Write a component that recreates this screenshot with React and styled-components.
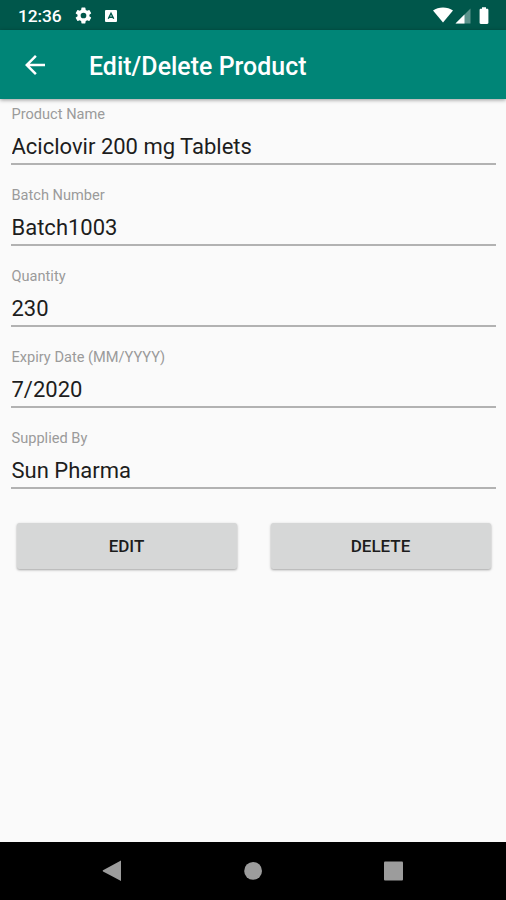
import React from 'react';
import styled, { createGlobalStyle } from 'styled-components';

const GlobalStyle = createGlobalStyle`
  * { box-sizing: border-box; }
  body { margin: 0; background: #fafafa; font-family: Roboto, sans-serif; }
`;

const Screen = styled.div`
  display: flex;
  flex-direction: column;
  width: 506px;
  height: 900px;
  background: #fafafa;
  overflow: hidden;
`;

const StatusBar = styled.header`
  display: flex;
  flex: none;
  align-items: center;
  height: 30px;
  padding: 1px 15px 0 18px;
  background: #00574b;
  color: #fff;
`;

const Clock = styled.span`
  width: 56px;
  font-size: 17.4px;
  font-weight: 500;
  line-height: 20px;
  letter-spacing: -0.1px;
  white-space: nowrap;
`;

const Notifications = styled.div`
  display: flex;
  align-items: center;
  gap: 11px;
  flex: 1;
`;

const SystemIcons = styled.div`
  display: flex;
  align-items: center;
`;

const Icon = styled.svg`
  display: block;
  flex: none;
`;

const AppBar = styled.nav`
  display: flex;
  flex: none;
  align-items: center;
  height: 69px;
  padding-left: 20px;
  background: #008577;
  color: #fff;
  box-shadow: 0 1px 4px rgba(0, 0, 0, 0.4);
`;

const BackButton = styled.button`
  width: 30px;
  height: 30px;
  margin: 0 39px 0 0;
  padding: 0;
  border: 0;
  background: none;
  color: inherit;
`;

const Title = styled.h1`
  margin: 4px 0 0;
  font-size: 24.9px;
  font-weight: 500;
  line-height: 32px;
  letter-spacing: 0.03px;
  white-space: nowrap;
`;

const Form = styled.main`
  flex: 1;
  padding: 5px 10px 0 11px;
`;

const Field = styled.label`
  display: block;
  height: 81.1px;
`;

const Label = styled.span`
  display: block;
  height: 20px;
  padding-left: 0.5px;
  color: #9b9b9b;
  font-size: 14.6px;
  font-weight: 400;
  line-height: 20px;
`;

const Input = styled.input`
  display: block;
  width: 100%;
  height: 41px;
  padding: 8px 0 3px 0.5px;
  border: 0;
  border-bottom: 2px solid #b2b2b2;
  border-radius: 0;
  outline: 0;
  background: none;
  color: #1d1d1d;
  font: 400 22px/28px Roboto, sans-serif;
`;

const Actions = styled.div`
  display: grid;
  grid-template-columns: 1fr 1fr;
  gap: 34px;
  padding: 13.5px 5.5px 0;
`;

const ActionButton = styled.button`
  height: 46px;
  padding: 0;
  border: 0;
  border-radius: 2.5px;
  background: #d6d7d7;
  color: #1c1c1c;
  font: 500 17px/46px Roboto, sans-serif;
  text-transform: uppercase;
  box-shadow: 0 1px 2.5px rgba(0, 0, 0, 0.36);
`;

const NavigationBar = styled.footer`
  display: flex;
  flex: none;
  align-items: center;
  justify-content: space-between;
  height: 58px;
  padding: 0 102px;
  background: #000;
`;

const fields = [
  ['Product Name', 'Aciclovir 200 mg Tablets'],
  ['Batch Number', 'Batch1003'],
  ['Quantity', '230'],
  ['Expiry Date (MM/YYYY)', '7/2020'],
  ['Supplied By', 'Sun Pharma'],
];

export default function App() {
  return (
    <>
      <GlobalStyle />
      <Screen>
        <StatusBar>
          <Clock>12:36</Clock>
          <Notifications>
            <Icon width="19" height="19" viewBox="0 0 24 24" fill="currentColor">
              <path d="M19.4 13a7.8 7.8 0 0 0 0-2l2.1-1.6a.5.5 0 0 0 .1-.6l-2-3.5a.5.5 0 0 0-.6-.2l-2.5 1a7.3 7.3 0 0 0-1.7-1l-.4-2.6a.5.5 0 0 0-.5-.5h-4a.5.5 0 0 0-.5.5L9 5.1a7.3 7.3 0 0 0-1.7 1l-2.5-1a.5.5 0 0 0-.6.2l-2 3.5a.5.5 0 0 0 .1.6L4.5 11a7.8 7.8 0 0 0 0 2l-2.2 1.6a.5.5 0 0 0-.1.6l2 3.5c.1.2.4.3.6.2l2.5-1a7.3 7.3 0 0 0 1.7 1l.4 2.6c0 .3.2.5.5.5h4c.3 0 .5-.2.5-.5l.4-2.6a7.3 7.3 0 0 0 1.7-1l2.5 1c.2.1.5 0 .6-.2l2-3.5a.5.5 0 0 0-.1-.6zM12 15.6a3.6 3.6 0 1 1 0-7.2 3.6 3.6 0 0 1 0 7.2z" />
            </Icon>
            <Icon width="14" height="14" viewBox="0 0 14 14">
              <rect x="1" y="1" width="12" height="12" rx="1" fill="#fff" />
              <path d="M4.3 9.7 7 4.3l2.7 5.4M5.3 8.3h3.4" fill="none" stroke="#00574b" strokeWidth="1.4" />
            </Icon>
          </Notifications>
          <SystemIcons>
            <Icon width="58" height="20" viewBox="0 0 58 20" fill="#fff">
              <path d="M0 4.5C5.3.4 14.7.4 20 4.5L10 16.5Z" />
              <path d="M37.5 2.5V17.5H22.5Z" opacity=".36" />
              <path d="M31.5 8.5V17.5H22.5Z" />
              <path d="M49 1.2h4v1.6h1.2c.7 0 1.2.5 1.2 1.2v12.7c0 .7-.5 1.2-1.2 1.2h-6.4c-.7 0-1.2-.5-1.2-1.2V4c0-.7.5-1.2 1.2-1.2H49z" />
            </Icon>
          </SystemIcons>
        </StatusBar>
        <AppBar>
          <BackButton aria-label="Back">
            <Icon width="30" height="30" viewBox="0 0 24 24" fill="currentColor">
              <path d="M20 11H7.83l5.59-5.59L12 4l-8 8 8 8 1.41-1.41L7.83 13H20z" />
            </Icon>
          </BackButton>
          <Title>Edit/Delete Product</Title>
        </AppBar>
        <Form>
          {fields.map(([label, value]) => (
            <Field key={label}>
              <Label>{label}</Label>
              <Input defaultValue={value} />
            </Field>
          ))}
          <Actions>
            <ActionButton>Edit</ActionButton>
            <ActionButton>Delete</ActionButton>
          </Actions>
        </Form>
        <NavigationBar>
          <Icon width="20" height="22" viewBox="0 0 20 22" fill="#9c9c9c">
            <path d="M1 10.2 19 .5V21Q10 16 1 11.4Q.3 10.8 1 10.2Z" />
          </Icon>
          <Icon width="18" height="18" viewBox="0 0 18 18" fill="#9c9c9c">
            <circle cx="9.1" cy="8.9" r="8.9" />
          </Icon>
          <Icon width="20" height="20" viewBox="0 0 20 20" fill="#9c9c9c">
            <rect x="0" y=".5" width="19" height="19" rx="1" />
          </Icon>
        </NavigationBar>
      </Screen>
    </>
  );
}
